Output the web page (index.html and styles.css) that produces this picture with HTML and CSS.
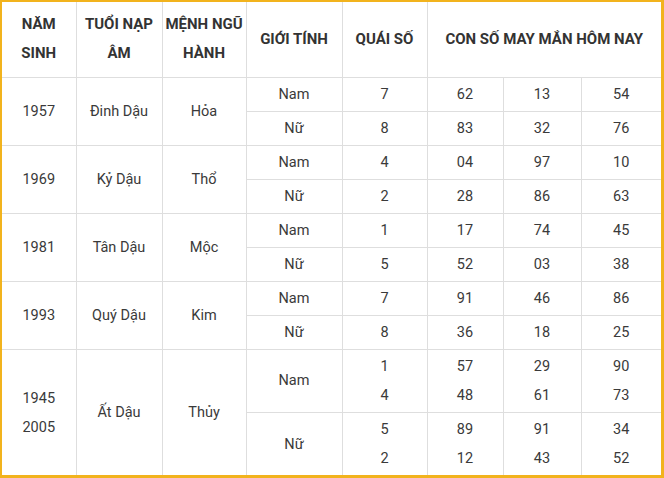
FILE: index.html
```html
<!DOCTYPE html>
<html lang="vi">
<head>
<meta charset="utf-8">
<link rel="stylesheet" href="styles.css">
</head>
<body>
<div class="frame">
<table class="luck">
<colgroup>
<col class="c1"><col class="c2"><col class="c3"><col class="c4"><col class="c5"><col class="c6"><col class="c7"><col class="c8">
</colgroup>
<thead>
<tr class="head">
<th>NĂM<br>SINH</th>
<th>TUỔI NẠP<br>ÂM</th>
<th>MỆNH NGŨ<br>HÀNH</th>
<th>GIỚI TÍNH</th>
<th>QUÁI SỐ</th>
<th colspan="3">CON SỐ MAY MẮN HÔM NAY</th>
</tr>
</thead>
<tbody>
<tr><td rowspan="2">1957</td><td rowspan="2">Đinh Dậu</td><td rowspan="2">Hỏa</td><td>Nam</td><td>7</td><td>62</td><td>13</td><td>54</td></tr>
<tr><td>Nữ</td><td>8</td><td>83</td><td>32</td><td>76</td></tr>
<tr><td rowspan="2">1969</td><td rowspan="2">Kỷ Dậu</td><td rowspan="2">Thổ</td><td>Nam</td><td>4</td><td>04</td><td>97</td><td>10</td></tr>
<tr><td>Nữ</td><td>2</td><td>28</td><td>86</td><td>63</td></tr>
<tr><td rowspan="2">1981</td><td rowspan="2">Tân Dậu</td><td rowspan="2">Mộc</td><td>Nam</td><td>1</td><td>17</td><td>74</td><td>45</td></tr>
<tr><td>Nữ</td><td>5</td><td>52</td><td>03</td><td>38</td></tr>
<tr><td rowspan="2">1993</td><td rowspan="2">Quý Dậu</td><td rowspan="2">Kim</td><td>Nam</td><td>7</td><td>91</td><td>46</td><td>86</td></tr>
<tr><td>Nữ</td><td>8</td><td>36</td><td>18</td><td>25</td></tr>
<tr class="tall"><td rowspan="2">1945<br>2005</td><td rowspan="2">Ất Dậu</td><td rowspan="2">Thủy</td><td>Nam</td><td>1<br>4</td><td>57<br>48</td><td>29<br>61</td><td>90<br>73</td></tr>
<tr class="tall last"><td>Nữ</td><td>5<br>2</td><td>89<br>12</td><td>91<br>43</td><td>34<br>52</td></tr>
</tbody>
</table>
</div>
</body>
</html>
```
FILE: styles.css
```css
html, body {
  margin: 0;
  padding: 0;
  background: #fff;
}
.frame {
  width: 664px;
  height: 478px;
  box-sizing: border-box;
  border-style: solid;
  border-color: #f2b31d;
  border-width: 2px 3px 3px 2px;
  overflow: hidden;
}
.luck {
  border-collapse: collapse;
  table-layout: fixed;
  width: 659px;
  font-family: Roboto, "Liberation Sans", sans-serif;
  font-size: 14.5px;
  color: #3a3a3a;
}
.c1 { width: 74px; }
.c2 { width: 86px; }
.c3 { width: 84px; }
.c4 { width: 96px; }
.c5 { width: 85px; }
.c6 { width: 76px; }
.c7 { width: 78px; }
.c8 { width: 80px; }
.luck th, .luck td {
  border: 1px solid #dedede;
  text-align: center;
  vertical-align: middle;
  padding: 0;
  line-height: 29px;
}
.luck th {
  font-weight: 700;
  color: #333;
  font-size: 15px;
}
.luck tr > :first-child { border-left: none; }
.luck tr > :last-child { border-right: none; }
.head th { border-top: none; }
.head { height: 75px; }
.luck tbody tr { height: 34px; }
.luck tbody tr.tall { height: 63px; }
.luck tbody tr.last { height: 64px; }
.last td { border-bottom: none; }
.luck tbody tr.tall td[rowspan] { border-bottom: none; }
```
